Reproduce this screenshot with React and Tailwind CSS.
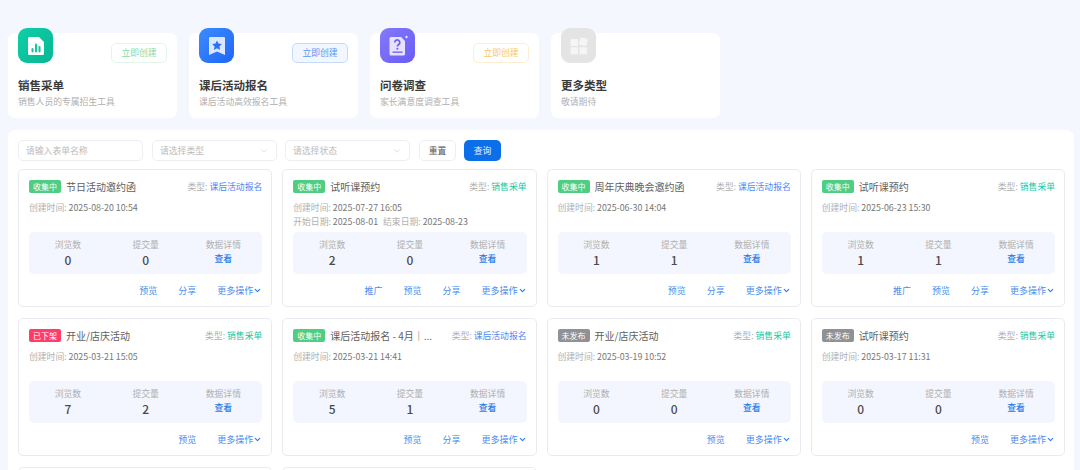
import { ChevronDown } from "lucide-react";

const font = "font-['Noto_Sans_CJK_SC','Noto_Sans',sans-serif]";

const tools = [
    { title: '销售采单', desc: '销售人员的专属招生工具', icon: 'sale', bg: 'bg-gradient-to-br from-[#0fcfa8] to-[#06b893]', btn: 'border-[#dff6e9] text-[#86daa3]' },
    { title: '课后活动报名', desc: '课后活动高效报名工具', icon: 'star', bg: 'bg-gradient-to-br from-[#3d8bff] to-[#1f66f5]', btn: 'bg-[#f1f6ff] border-[#c6dbf9] text-[#5c95f1]' },
    { title: '问卷调查', desc: '家长满意度调查工具', icon: 'ask', bg: 'bg-gradient-to-br from-[#8478fb] to-[#6a5cf6]', btn: 'border-[#fdeed3] text-[#f6c672]' },
    { title: '更多类型', desc: '敬请期待', icon: 'more', bg: 'bg-[#e4e4e4]' },
]

const forms = [
    { status: 'on', title: '节日活动邀约函', type: '课后活动报名', created: '2025-08-20 10:54', view: 0, submit: 0, actions: ['预览', '分享'] },
    { status: 'on', title: '试听课预约', type: '销售采单', created: '2025-07-27 16:05', start: '2025-08-01', end: '2025-08-23', view: 2, submit: 0, actions: ['推广', '预览', '分享'] },
    { status: 'on', title: '周年庆典晚会邀约函', type: '课后活动报名', created: '2025-06-30 14:04', view: 1, submit: 1, actions: ['预览', '分享'] },
    { status: 'on', title: '试听课预约', type: '销售采单', created: '2025-06-23 15:30', view: 1, submit: 1, actions: ['推广', '预览', '分享'] },
    { status: 'off', title: '开业/店庆活动', type: '销售采单', created: '2025-03-21 15:05', view: 7, submit: 2, actions: ['预览'] },
    { status: 'on', title: '课后活动报名 - 4月｜...', type: '课后活动报名', created: '2025-03-21 14:41', view: 5, submit: 1, actions: ['预览', '分享'] },
    { status: 'draft', title: '开业/店庆活动', type: '销售采单', created: '2025-03-19 10:52', view: 0, submit: 0, actions: ['预览'] },
    { status: 'draft', title: '试听课预约', type: '销售采单', created: '2025-03-17 11:31', view: 0, submit: 0, actions: ['预览'] },
]

const statusMap = {
    on: { text: '收集中', cls: 'bg-[#4fce83]' },
    off: { text: '已下架', cls: 'bg-[#ff3d68]' },
    draft: { text: '未发布', cls: 'bg-[#8f9194]' },
}

const ToolIcon = ({ name }) => {
    if (name === 'sale') {
        return (
            <svg width="18" height="20" viewBox="0 0 18 20">
                <path d="M2.5 1H12l5 5v11.5a1.5 1.5 0 0 1-1.5 1.5h-13A1.5 1.5 0 0 1 1 17.500V2.500A1.500 1.500 0 0 1 2.500 1z" fill="#fff" />
                <rect x="4.500" y="12" width="2" height="4.500" rx="1" fill="#12c4a0" />
                <rect x="8" y="7.500" width="2" height="9" rx="1" fill="#12c4a0" />
                <rect x="11.500" y="10" width="2" height="6.500" rx="1" fill="#12c4a0" />
            </svg>
        )
    }
    if (name === 'star') {
        return (
            <svg width="18" height="20" viewBox="0 0 18 20">
                <path d="M2 1h14a1 1 0 0 1 1 1v17l-8-3.500L1 19V2a1 1 0 0 1 1-1z" fill="#dbe8ff" />
                <path d="M9 4.500l1.500 3.100 3.400.5-2.450 2.400.6 3.400L9 12.300l-3.050 1.600.6-3.400L4.100 8.100l3.400-.5z" fill="#2a72f8" />
            </svg>
        )
    }
    if (name === 'ask') {
        return (
            <svg width="20" height="22" viewBox="0 0 20 22">
                <path d="M3 2h10l4 4v13a1.500 1.500 0 0 1-1.500 1.500H3A1.500 1.500 0 0 1 1.500 19V3.500A1.500 1.500 0 0 1 3 2z" fill="#e6e2ff" />
                <path d="M6.800 7.500a2.500 2.500 0 1 1 3.800 2.100c-.8.500-1.200.9-1.200 1.900" fill="none" stroke="#6a5cf6" strokeWidth="1.700" />
                <circle cx="9.400" cy="13.800" r="1" fill="#6a5cf6" />
                <rect x="4.500" y="16.500" width="10" height="1.300" fill="#6a5cf6" />
                <circle cx="18.500" cy="2" r="1.200" fill="#e6e2ff" />
            </svg>
        )
    }
    return (
        <svg width="18" height="18" viewBox="0 0 18 18">
            <rect x="0.500" y="2" width="7.500" height="7" rx="0.800" fill="#f5f5f5" />
            <rect x="9.600" y="1" width="7.500" height="7.500" rx="0.800" fill="#f5f5f5" transform="rotate(12 13 5)" />
            <rect x="0.500" y="10.200" width="7.500" height="7" rx="0.800" fill="#f5f5f5" />
            <rect x="9.500" y="10.200" width="7.500" height="7" rx="0.800" fill="#f5f5f5" />
        </svg>
    )
}

const ToolCard = ({ tool }) => {
    return (
        <div className="w-[169px] h-[85px] mt-[5px] px-[10px] bg-white rounded-[7px]">
            <div className="flex justify-between items-start -mt-[5px]">
                <div className={`w-[35px] h-[35px] rounded-[9px] flex items-center justify-center ${tool.bg}`}>
                    <ToolIcon name={tool.icon} />
                </div>
                {tool.btn && (
                    <div className={`w-[56px] h-[20px] mt-[15px] border rounded-[5px] text-[8.800px] leading-[18px] text-center ${tool.btn}`}>
                        立即创建
                    </div>
                )}
            </div>
            <div className="mt-[14px] text-[11.500px] leading-[16px] font-semibold text-[#3a3a3a]">{tool.title}</div>
            <div className="mt-[3px] text-[8.800px] leading-[12px] text-[#b0b0b0]">{tool.desc}</div>
        </div>
    )
}

const FormCard = ({ form }) => {
    const status = statusMap[form.status]
    const typeColor = form.type === '销售采单' ? 'text-[#1cc6a0]' : 'text-[#4f86f7]'

    return (
        <div className="h-[138px] pl-[10px] pr-[9px] pt-[10px] bg-white border border-[#e9ebf0] rounded-[5px] flex flex-col">
            <div className="flex items-center h-[13px]">
                <div className={`w-[32px] h-[13px] rounded-[2px] text-white text-[8px] leading-[13px] text-center shrink-0 ${status.cls}`}>{status.text}</div>
                <div className="ml-[5px] text-[10px] text-[#606060] whitespace-nowrap">{form.title}</div>
                <div className="ml-auto text-[8.800px] text-[#b0b0b0] whitespace-nowrap">
                    类型: <span className={typeColor}>{form.type}</span>
                </div>
            </div>
            <div className="mt-[8px] h-[28px] text-[8.800px] leading-[14px] text-[#777]">
                <div><span className="text-[#b0b0b0]">创建时间: </span>{form.created}</div>
                {form.start && (
                    <div>
                        <span className="text-[#b0b0b0]">开始日期: </span>{form.start}
                        <span className="text-[#b0b0b0] ml-[5px]">结束日期: </span>{form.end}
                    </div>
                )}
            </div>
            <div className="mt-[3px] h-[42px] pt-[6px] bg-[#f3f6fe] rounded-[5px] grid grid-cols-3 text-center">
                <div>
                    <div className="text-[8.800px] leading-[13px] text-[#b0b0b0]">浏览数</div>
                    <div className="text-[12px] leading-[17px] font-medium text-[#4a4a4a]">{form.view}</div>
                </div>
                <div>
                    <div className="text-[8.800px] leading-[13px] text-[#b0b0b0]">提交量</div>
                    <div className="text-[12px] leading-[17px] font-medium text-[#4a4a4a]">{form.submit}</div>
                </div>
                <div>
                    <div className="text-[8.800px] leading-[13px] text-[#b0b0b0]">数据详情</div>
                    <div className="text-[8.800px] leading-[16px] font-medium text-[#2b7de9]">查看</div>
                </div>
            </div>
            <div className="mt-[10px] flex justify-end gap-[21px] text-[9px] leading-[13px] text-[#4a8def]">
                {form.actions.map((action, idx) => <span key={idx}>{action}</span>)}
                <span className="flex items-center">更多操作<ChevronDown size={9} strokeWidth={3} className="text-[#2b7de9]" /></span>
            </div>
        </div>
    )
}

const Select = ({ text }) => {
    return (
        <div className="w-[125px] h-[21px] px-[7px] flex items-center justify-between border border-[#eceef1] rounded-[5px] text-[8.800px] text-[#bbb]">
            {text}
            <ChevronDown size={10} strokeWidth={1.200} className="text-[#bbb]" />
        </div>
    )
}

const App = () => {
    return (
        <div className={`w-[1080px] h-[470px] overflow-hidden bg-[#f4f7fe] pt-[28px] pl-[8px] ${font}`}>
            <div className="flex gap-[12px]">
                {tools.map((tool, idx) => <ToolCard key={idx} tool={tool} />)}
            </div>
            <div className="w-[1066px] mt-[12px] pl-[10px] pr-[9px] py-[10px] bg-white rounded-t-[7px]">
                <div className="flex items-center h-[21px]">
                    <div className="w-[125px] h-[21px] px-[7px] flex items-center border border-[#eceef1] rounded-[5px] text-[8.800px] text-[#bbb]">请输入表单名称</div>
                    <div className="ml-[9px]"><Select text="请选择类型" /></div>
                    <div className="ml-[8px]"><Select text="请选择状态" /></div>
                    <div className="ml-[9px] w-[37px] h-[21px] border border-[#eceef1] rounded-[5px] text-[8.800px] leading-[19px] text-center text-[#555]">重置</div>
                    <div className="ml-[8px] w-[37px] h-[21px] bg-[#0a6fe8] rounded-[5px] text-[8.800px] leading-[21px] text-center text-[#e8f1ff]">查询</div>
                </div>
                <div className="mt-[8px] grid grid-cols-4 gap-x-[10px] gap-y-[11px]">
                    {forms.map((form, idx) => <FormCard key={idx} form={form} />)}
                    <div className="h-[138px] bg-white border border-[#e9ebf0] rounded-[5px]"></div>
                    <div className="h-[138px] bg-white border border-[#e9ebf0] rounded-[5px]"></div>
                </div>
            </div>
        </div>
    );
}

export default App;
